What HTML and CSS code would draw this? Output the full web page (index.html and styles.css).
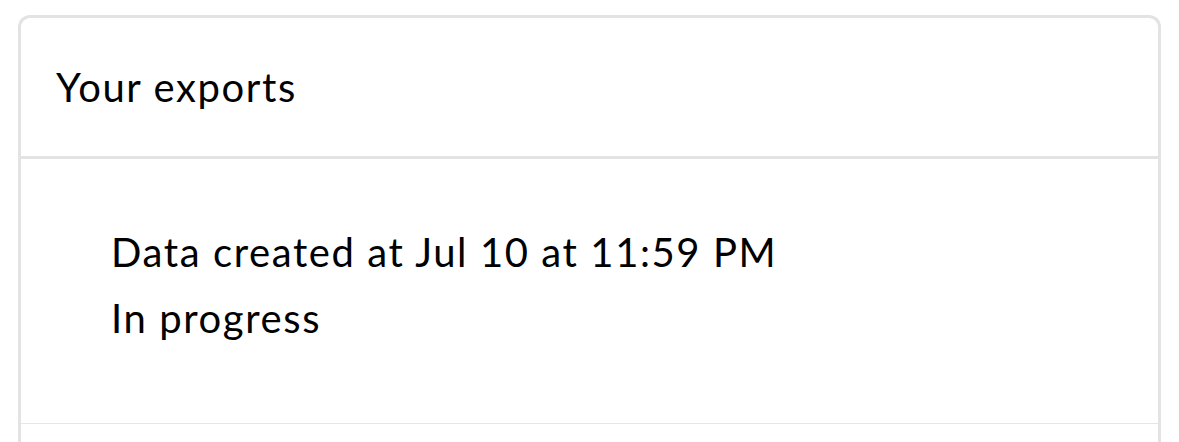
FILE: index.html
```html
<!DOCTYPE html>
<html lang="en">

<head>
	<title>Your exports</title>
	<link rel="stylesheet" href="styles.css">
</head>

<body>
	<!-- Exports card -->
	<div class="card">
		<div class="card-header">Your exports</div>
		<ul class="export-list">
			<li class="export-item">
				<div class="export-title">Data created at Jul 10 at 11:59 PM</div>
				<div class="export-status">In progress</div>
			</li>
			<li class="export-item export-item-next"></li>
		</ul>
	</div>
</body>

</html>
```

FILE: styles.css
```css
/* Page base */
body {
	margin: 0;
	padding: 15px 18px 0 18px;
	background: #fff;
	font-family: Lato, "Noto Sans", sans-serif;
	color: #000;
	letter-spacing: 1.6px;
}

/* Card with rounded top */
.card {
	border: 3px solid #e3e3e3;
	border-bottom: none;
	border-radius: 12px 12px 0 0;
}

/* Header row */
.card-header {
	height: 138px;
	display: flex;
	align-items: center;
	padding-left: 35px;
	font-size: 40px;
	border-bottom: 3px solid #e3e3e3;
}

/* List of exports */
.export-list {
	list-style: none;
	margin: 0;
	padding: 0;
}

.export-item {
	padding: 60px 0 72px 90px;
	font-size: 40px;
	line-height: 66px;
	border-bottom: 1px solid #e6e6e6;
}

/* Next row, cut off by the window */
.export-item-next {
	padding: 0;
	height: 18px;
	border-bottom: none;
}
```
